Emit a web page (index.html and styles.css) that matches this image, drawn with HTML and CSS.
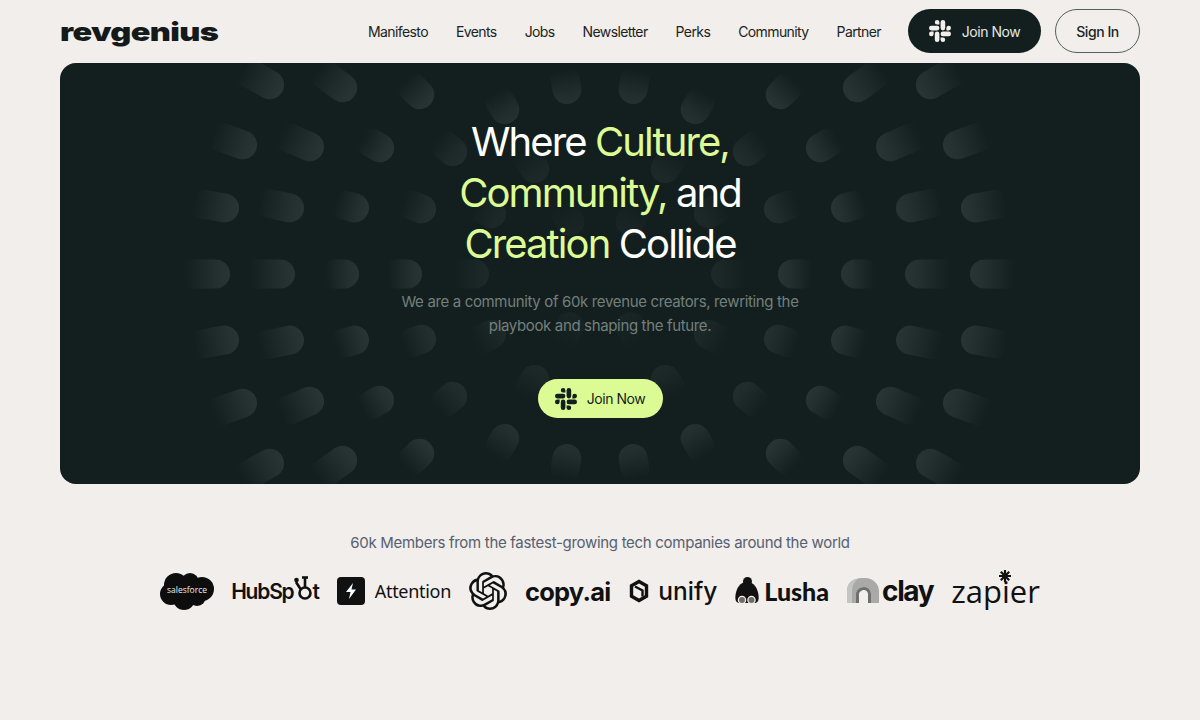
FILE: index.html
```html
<!DOCTYPE html>
<html lang="en">
<head>
    <meta charset="UTF-8">
    <meta name="viewport" content="width=device-width, initial-scale=1.0">
    <title>RevGenius</title>
    <link rel="stylesheet" href="styles.css">
</head>
<body>
    <!-- Slack mark, used by both join buttons -->
    <svg class="defs" aria-hidden="true">
        <symbol id="slack" viewBox="0 0 24 24">
            <path d="M5.042 15.165a2.528 2.528 0 0 1-2.52 2.523A2.528 2.528 0 0 1 0 15.165a2.527 2.527 0 0 1 2.522-2.52h2.52v2.52zM6.313 15.165a2.527 2.527 0 0 1 2.521-2.52 2.527 2.527 0 0 1 2.521 2.52v6.313A2.528 2.528 0 0 1 8.834 24a2.528 2.528 0 0 1-2.521-2.522v-6.313zM8.834 5.042a2.528 2.528 0 0 1-2.521-2.52A2.528 2.528 0 0 1 8.834 0a2.528 2.528 0 0 1 2.521 2.522v2.52H8.834zM8.834 6.313a2.528 2.528 0 0 1 2.521 2.521 2.528 2.528 0 0 1-2.521 2.521H2.522A2.528 2.528 0 0 1 0 8.834a2.528 2.528 0 0 1 2.522-2.521h6.312zM18.956 8.834a2.528 2.528 0 0 1 2.522-2.521A2.528 2.528 0 0 1 24 8.834a2.528 2.528 0 0 1-2.522 2.521h-2.522V8.834zM17.688 8.834a2.528 2.528 0 0 1-2.523 2.521 2.527 2.527 0 0 1-2.52-2.521V2.522A2.527 2.527 0 0 1 15.165 0a2.528 2.528 0 0 1 2.523 2.522v6.312zM15.165 18.956a2.528 2.528 0 0 1 2.523 2.522A2.528 2.528 0 0 1 15.165 24a2.527 2.527 0 0 1-2.52-2.522v-2.522h2.52zM15.165 17.688a2.527 2.527 0 0 1-2.52-2.523 2.526 2.526 0 0 1 2.52-2.52h6.313A2.527 2.527 0 0 1 24 15.165a2.528 2.528 0 0 1-2.522 2.523h-6.313z"/>
        </symbol>
    </svg>

    <!-- Header -->
    <header class="site-header">
        <a class="brand" href="#"><span class="brand-text">revgenius</span></a>
        <nav class="main-nav">
            <a href="#">Manifesto</a>
            <a href="#">Events</a>
            <a href="#">Jobs</a>
            <a href="#">Newsletter</a>
            <a href="#">Perks</a>
            <a href="#">Community</a>
            <a href="#">Partner</a>
        </nav>
        <div class="header-actions">
            <a class="btn btn-dark" href="#"><svg class="slack-icon"><use href="#slack"/></svg>Join Now</a>
            <a class="btn btn-outline" href="#">Sign In</a>
        </div>
    </header>

    <!-- Hero -->
    <section class="hero">
        <svg class="hero-pattern" viewBox="60 63 1080 421" aria-hidden="true">
            <defs>
                <linearGradient id="pillFade" x1="0" y1="0" x2="1" y2="0">
                    <stop offset="0.12" stop-color="#fff" stop-opacity="0"/>
                    <stop offset="0.75" stop-color="#fff" stop-opacity="0.078"/>
                    <stop offset="1" stop-color="#fff" stop-opacity="0.096"/>
                </linearGradient>
                <rect id="pill" x="-38" y="-14.500" width="52" height="29" rx="14.500" fill="url(#pillFade)"/>
                <rect id="pillShort" x="-25" y="-14.500" width="39" height="29" rx="14.500" fill="url(#pillFade)"/>
                <g id="quarter">
                    <use href="#pill" transform="translate(270 85) rotate(29.8)"/>
                    <use href="#pill" transform="translate(343 88) rotate(35.9)"/>
                    <use href="#pillShort" transform="translate(420 95) rotate(44.8)"/>
                    <use href="#pillShort" transform="translate(505 110) rotate(59.9)" opacity="0.85"/>
                    <use href="#pillShort" transform="translate(567 90) rotate(79.8)" opacity="0.85"/>
                    <use href="#pillShort" transform="translate(473 48) rotate(60)" opacity="0.7"/>
                    <use href="#pill" transform="translate(243 145) rotate(19.9)"/>
                    <use href="#pill" transform="translate(310 147) rotate(23.6)"/>
                    <use href="#pillShort" transform="translate(380 148) rotate(29.8)"/>
                    <use href="#pillShort" transform="translate(453 152) rotate(39.7)" opacity="0.7"/>
                    <use href="#pillShort" transform="translate(535 169) rotate(58.2)" opacity="0.5"/>
                    <use href="#pill" transform="translate(225 208) rotate(10)"/>
                    <use href="#pill" transform="translate(290 208) rotate(12)"/>
                    <use href="#pillShort" transform="translate(355 208) rotate(15)"/>
                    <use href="#pillShort" transform="translate(422 209) rotate(20)" opacity="0.8"/>
                    <use href="#pillShort" transform="translate(492 214) rotate(29)" opacity="0.5"/>
                    <use href="#pillShort" transform="translate(570 222) rotate(60)" opacity="0.3"/>
                </g>
                <g id="middle">
                    <use href="#pill" transform="translate(216 274)"/>
                    <use href="#pill" transform="translate(281 274)"/>
                    <use href="#pillShort" transform="translate(345 274)"/>
                    <use href="#pillShort" transform="translate(408 274)"/>
                    <use href="#pillShort" transform="translate(475 274)" opacity="0.5"/>
                </g>
            </defs>
            <use href="#quarter"/>
            <use href="#quarter" transform="translate(1200 0) scale(-1 1)"/>
            <use href="#quarter" transform="translate(0 548) scale(1 -1)"/>
            <use href="#quarter" transform="translate(1200 548) scale(-1 -1)"/>
            <use href="#middle"/>
            <use href="#middle" transform="translate(1200 0) scale(-1 1)"/>
        </svg>
        <div class="hero-content">
            <h1>Where <em>Culture,</em><br><em>Community,</em> and<br><em>Creation</em> Collide</h1>
            <p>We are a community of 60k revenue creators, rewriting the<br>playbook and shaping the future.</p>
            <a class="btn btn-lime" href="#"><svg class="slack-icon"><use href="#slack"/></svg>Join Now</a>
        </div>
    </section>

    <!-- Member companies -->
    <section class="members">
        <p class="members-title">60k Members from the fastest-growing tech companies around the world</p>
        <div class="logo-row">
            <div class="logo logo-salesforce">
                <svg viewBox="0 0 54 38" width="54" height="38">
                    <g fill="#0d0d0d">
                        <circle cx="16" cy="13" r="12"/>
                        <circle cx="30" cy="10" r="9"/>
                        <circle cx="42" cy="17" r="12"/>
                        <circle cx="11" cy="22" r="11"/>
                        <circle cx="24" cy="27" r="11"/>
                        <circle cx="37" cy="25" r="9"/>
                    </g>
                    <text x="27" y="21" class="salesforce-text">salesforce</text>
                </svg>
            </div>
            <div class="logo logo-hubspot">HubSp<svg class="hubspot-o" viewBox="0 0 20 28" width="20" height="28"><g fill="none" stroke="#111" stroke-width="2.600"><circle cx="11" cy="19" r="5.500"/><path d="M11 13V4M6.500 15L2 8"/></g><path d="M8 3.500h6" stroke="#111" stroke-width="2.600"/><circle cx="2.500" cy="6" r="2.300" fill="#111"/></svg>t</div>
            <div class="logo logo-attention">
                <svg viewBox="0 0 28 28" width="28" height="28"><rect width="28" height="28" rx="4" fill="#111"/><path d="M16 6l-7 9h4.500L12 22l7-9.500h-4.500z" fill="#fff"/></svg>
                <span>Attention</span>
            </div>
            <div class="logo logo-openai">
                <svg viewBox="0 0 24 24" width="38" height="38"><path fill="#111" d="M22.2819 9.8211a5.9847 5.9847 0 0 0-.5157-4.9108 6.0462 6.0462 0 0 0-6.5098-2.9A6.0651 6.0651 0 0 0 4.9807 4.1818a5.9847 5.9847 0 0 0-3.9977 2.9 6.0462 6.0462 0 0 0 .7427 7.0966 5.98 5.98 0 0 0 .511 4.9107 6.051 6.051 0 0 0 6.5146 2.9001A5.9847 5.9847 0 0 0 13.2599 24a6.0557 6.0557 0 0 0 5.7718-4.2058 5.9894 5.9894 0 0 0 3.9977-2.9001 6.0557 6.0557 0 0 0-.7475-7.0729zm-9.022 12.6081a4.4755 4.4755 0 0 1-2.8764-1.0408l.1419-.0804 4.7783-2.7582a.7948.7948 0 0 0 .3927-.6813v-6.7369l2.02 1.1686a.071.071 0 0 1 .038.052v5.5826a4.504 4.504 0 0 1-4.4945 4.4944zm-9.6607-4.1254a4.4708 4.4708 0 0 1-.5346-3.0137l.142.0852 4.783 2.7582a.7712.7712 0 0 0 .7806 0l5.8428-3.3685v2.3324a.0804.0804 0 0 1-.0332.0615L9.74 19.9502a4.4992 4.4992 0 0 1-6.1408-1.6464zM2.3408 7.8956a4.485 4.485 0 0 1 2.3655-1.9728V11.6a.7664.7664 0 0 0 .3879.6765l5.8144 3.3543-2.0201 1.1685a.0757.0757 0 0 1-.071 0l-4.8303-2.7865A4.504 4.504 0 0 1 2.3408 7.872zm16.5963 3.8558L13.1038 8.364 15.1192 7.2a.0757.0757 0 0 1 .071 0l4.8303 2.7913a4.4944 4.4944 0 0 1-.6765 8.1042v-5.6772a.79.79 0 0 0-.407-.667zm2.0107-3.0231l-.142-.0852-4.7735-2.7818a.7759.7759 0 0 0-.7854 0L9.409 9.2297V6.8974a.0662.0662 0 0 1 .0284-.0615l4.8303-2.7866a4.4992 4.4992 0 0 1 6.6802 4.66zM8.3065 12.863l-2.02-1.1638a.0804.0804 0 0 1-.038-.0567V6.0742a4.4992 4.4992 0 0 1 7.3757-3.4537l-.142.0805L8.704 5.459a.7948.7948 0 0 0-.3927.6813zm1.0976-2.3654l2.602-1.4998 2.6069 1.4998v2.9994l-2.5974 1.4997-2.6067-1.4997Z"/></svg>
            </div>
            <div class="logo logo-copy">copy.ai</div>
            <div class="logo logo-unify">
                <svg viewBox="0 0 22 24" width="22" height="24"><path d="M11 2.500l7.500 4.300v10.400L11 21.500l-7.500-4.300V6.800z" fill="none" stroke="#111" stroke-width="3.400"/><path d="M7 7.500l7.500 4v6" fill="none" stroke="#111" stroke-width="2.400"/></svg>
                <span>unify</span>
            </div>
            <div class="logo logo-lusha">
                <svg viewBox="0 0 24 28" width="24" height="28"><circle cx="12.500" cy="4.500" r="4.500" fill="#111"/><path d="M12 5C5 5 1.500 11 .5 18c-.5 4 0 7 3 8h17c3-1 3.500-4 3-8C22.500 11 19 5 12 5z" fill="#111"/><g fill="#6c6c6c" stroke="#f1eeeb" stroke-width="1.300"><circle cx="7" cy="23" r="3.600"/><circle cx="16.500" cy="23" r="3.600"/></g></svg>
                <span>Lusha</span>
            </div>
            <div class="logo logo-clay">
                <svg viewBox="0 0 32 26" width="32" height="26"><path d="M0 25V13C0 5 6 0 15 0h3c8 0 14 6 14 13v12h-8V16c0-4-3-7-7-7s-8 3-8 7v9z" fill="#a9aaa8"/><path d="M0 25V13C0 6 5 1 12 0.500 7 3 5 8 5 14v11z" fill="#c4c4c2"/><path d="M9 25v-9c0-4 4-7 8-7s7 3 7 7v9h-3v-9c0-2-2-4-4-4s-5 2-5 4v9z" fill="#6e6f6e"/></svg>
                <span>clay</span>
            </div>
            <div class="logo logo-zapier">
                <span>zapier</span>
                <svg class="zapier-star" viewBox="0 0 12 12" width="12" height="12"><path d="M6 0v12M0 6h12M1.800 1.800l8.400 8.400M10.200 1.800l-8.400 8.400" stroke="#111" stroke-width="2.200"/></svg>
            </div>
        </div>
    </section>
</body>
</html>
```

FILE: styles.css
```css
/* General */
* {
    box-sizing: border-box;
}

body {
    margin: 0;
    background-color: #f1eeeb;
    color: #1a2322;
    font-family: Inter, "Liberation Sans", sans-serif;
}

a {
    color: inherit;
    text-decoration: none;
}

.defs {
    display: none;
}

/* Header */
.site-header {
    display: flex;
    align-items: center;
    height: 63px;
    padding: 0 60px 1px;
}

.brand {
    display: block;
    width: 158px;
    height: 44px;
    padding-top: 2px;
    line-height: 42px;
}

.brand-text {
    display: inline-block;
    font-size: 26px;
    font-weight: 900;
    letter-spacing: -0.5px;
    color: #14191a;
    transform: scaleX(1.25);
    transform-origin: left center;
}

.main-nav {
    display: flex;
    gap: 28px;
    margin-left: auto;
    margin-right: 27px;
    font-size: 14px;
    letter-spacing: -0.6px;
}

.header-actions {
    display: flex;
    gap: 14px;
}

/* Buttons */
.btn {
    display: inline-flex;
    align-items: center;
    justify-content: center;
    height: 44px;
    border-radius: 22px;
    font-size: 14px;
    letter-spacing: -0.45px;
}

.btn-dark {
    width: 133px;
    gap: 11px;
    background-color: #121f1e;
    color: #e6e8e6;
}

.btn-dark .slack-icon {
    fill: #f1eeeb;
}

.btn-outline {
    width: 85px;
    border: 1px solid #55605e;
    font-weight: 500;
}

.btn-lime {
    width: 125px;
    height: 39px;
    gap: 10px;
    background-color: #ddfb94;
    color: #121f1e;
}

.slack-icon {
    width: 22px;
    height: 22px;
    fill: #121f1e;
}

/* Hero */
.hero {
    position: relative;
    height: 421px;
    margin: 0 60px;
    border-radius: 16px;
    background-color: #121f1e;
    overflow: hidden;
}

.hero-pattern {
    position: absolute;
    top: 0;
    left: 0;
    width: 100%;
    height: 100%;
}

.hero-content {
    position: relative;
    display: flex;
    flex-direction: column;
    align-items: center;
    padding-top: 53px;
    text-align: center;
}

.hero-content h1 {
    margin: 0;
    font-size: 40px;
    font-weight: 400;
    line-height: 51px;
    letter-spacing: -1.9px;
    color: #fff;
}

.hero-content h1 em {
    font-style: normal;
    color: #ddfb94;
}

.hero-content p {
    margin: 21px 0 41px;
    font-size: 15px;
    line-height: 24px;
    letter-spacing: -0.35px;
    color: #747f7d;
}

/* Member logos */
.members {
    padding-top: 48px;
}

.members-title {
    margin: 0;
    font-size: 15px;
    line-height: 22px;
    letter-spacing: -0.3px;
    text-align: center;
    color: #566070;
}

.logo-row {
    display: flex;
    justify-content: center;
    align-items: center;
    gap: 18px;
    height: 42px;
    margin-top: 16px;
    color: #111;
}

.logo {
    display: flex;
    align-items: center;
}

.salesforce-text {
    font-family: "Open Sans", sans-serif;
    font-size: 8.500px;
    fill: #f1eeeb;
    text-anchor: middle;
}

.logo-hubspot {
    margin-left: -1px;
    font-size: 21px;
    font-weight: 600;
    letter-spacing: -1.2px;
}

.hubspot-o {
    margin: -6px -1px 0 0;
}

.logo-attention {
    gap: 10px;
    font-family: "Noto Sans", sans-serif;
    font-size: 18px;
    letter-spacing: -0.3px;
}

.logo-copy {
    font-size: 25.500px;
    font-weight: 700;
    letter-spacing: -0.8px;
}

.logo-unify {
    gap: 8px;
    font-size: 24.500px;
    font-weight: 500;
}

.logo-lusha {
    gap: 5px;
    font-family: Lato, sans-serif;
    font-size: 25px;
    font-weight: 900;
}

.logo-clay {
    gap: 3px;
    font-size: 28px;
    font-weight: 700;
    letter-spacing: -1.4px;
}

.logo-zapier {
    position: relative;
    font-family: "Open Sans", sans-serif;
    font-size: 31px;
}

.zapier-star {
    position: absolute;
    top: 0;
    left: 48px;
}
```
